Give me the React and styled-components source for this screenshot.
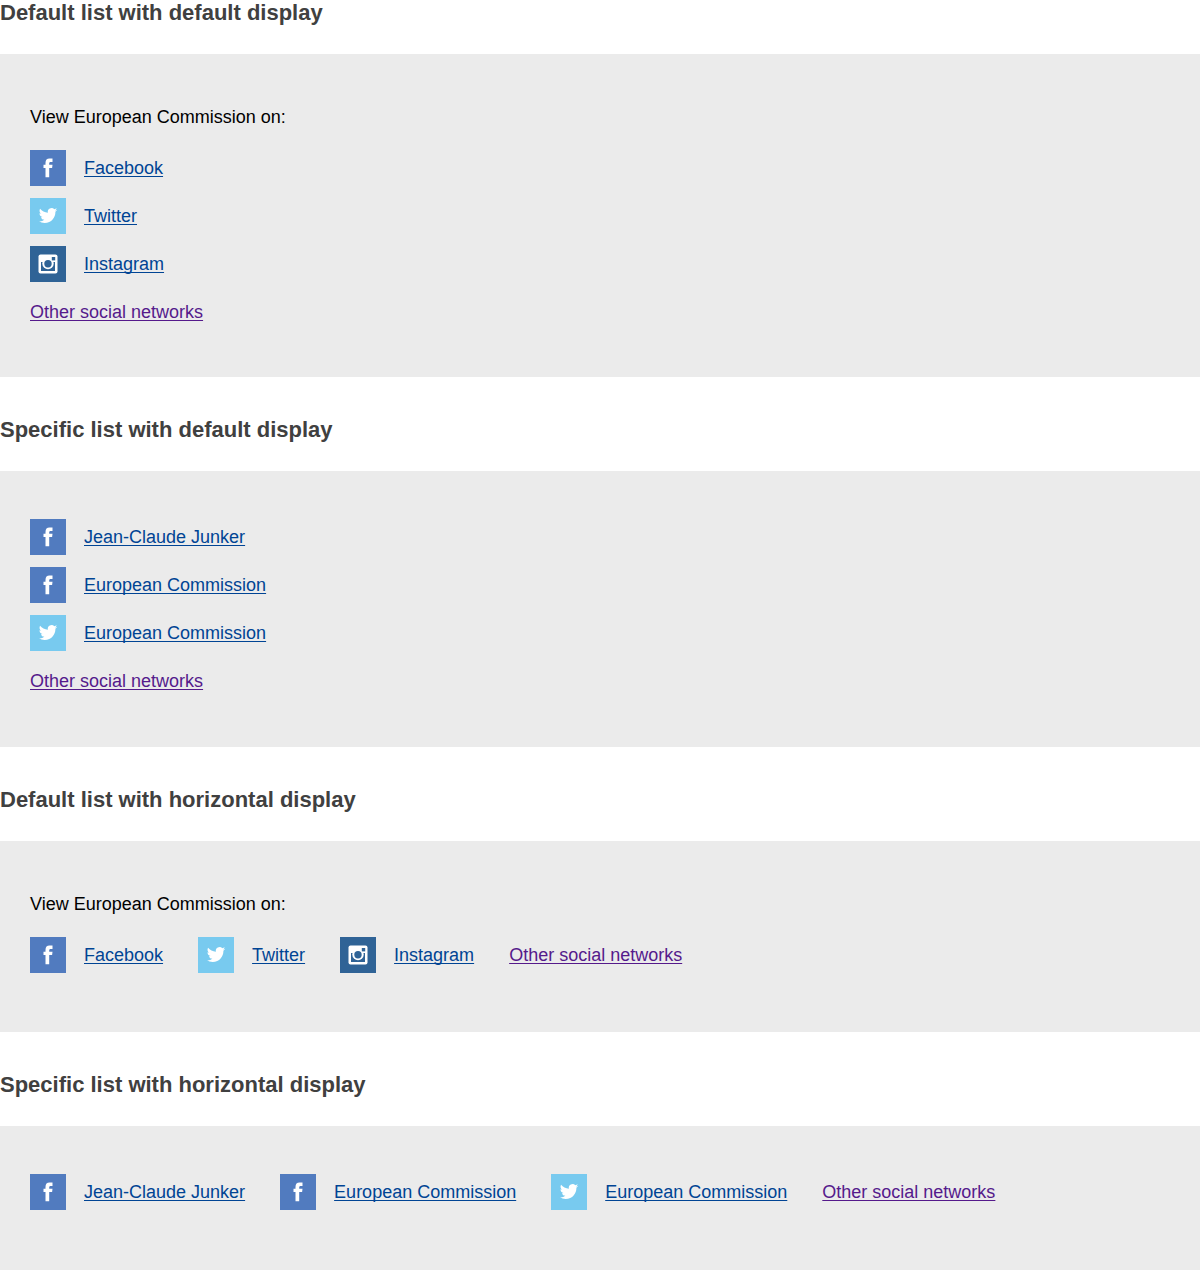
import React from "react";
import styled, { createGlobalStyle } from "styled-components";

const GlobalStyle = createGlobalStyle`
  body {
    margin: 0;
    background: #fff;
    color: #000;
    font-family: "Liberation Sans", Arial, sans-serif;
    font-size: 18px;
    line-height: 24px;
  }
`;

const Page = styled.main`
  display: flex;
  flex-direction: column;
  gap: 40px;
`;

const Heading = styled.h2`
  margin: 0 0 29px;
  color: #404040;
  font-size: 22px;
  line-height: 25px;
  font-weight: 700;
`;

const Panel = styled.div`
  padding: 48px 30px ${(p) => (p.$withIntro ? 47 : 48)}px;
  background: #ebebeb;
`;

const Intro = styled.p`
  margin: 3px 0 21px;
`;

const List = styled.ul`
  display: flex;
  flex-direction: ${(p) => (p.$horizontal ? "row" : "column")};
  flex-wrap: wrap;
  gap: ${(p) => (p.$horizontal ? "12px 35px" : "12px")};
  margin: 0;
  padding: 0 0 ${(p) => (p.$horizontal ? "12px" : "0")};
  list-style: none;
`;

const Item = styled.li`
  display: flex;
  align-items: center;
  min-height: 36px;
`;

const Link = styled.a`
  display: inline-flex;
  align-items: center;
  gap: 18px;
  color: ${(p) => (p.$visited ? "#551a8b" : "#004494")};
  text-decoration: underline;
  text-decoration-thickness: 1px;
  text-decoration-skip-ink: none;
  text-underline-offset: 2px;
`;

const Badge = styled.svg`
  flex: none;
  width: 36px;
  height: 36px;
  background: ${(p) => p.$color};
`;

const networks = {
  facebook: {
    color: "#517bbf",
    art: (
      <path
        fill="#fff"
        d="M15.500 27.300v-9.300h-2v-3.200h2v-1.900c0-2.900 1.400-4.300 4-4.300h3v3.300h-1.800c-1.100 0-1.500.500-1.500 1.500v1.400h3.300l-.4 3.200h-2.900v9.300z"
      />
    ),
  },
  twitter: {
    color: "#78caef",
    art: (
      <path
        fill="#fff"
        transform="translate(8.800 8.300) scale(.77)"
        d="M23.953 4.570a10 10 0 01-2.825.775 4.958 4.958 0 002.163-2.723c-.951.555-2.005.959-3.127 1.184a4.920 4.920 0 00-8.384 4.482C7.690 8.095 4.067 6.130 1.640 3.162a4.822 4.822 0 00-.666 2.475c0 1.710.870 3.213 2.188 4.096a4.904 4.904 0 01-2.228-.616v.060a4.923 4.923 0 003.946 4.827 4.996 4.996 0 01-2.212.085 4.936 4.936 0 004.604 3.417 9.867 9.867 0 01-6.102 2.105c-.390 0-.779-.023-1.170-.067a13.995 13.995 0 007.557 2.209c9.053 0 13.998-7.496 13.998-13.985 0-.210 0-.420-.015-.630A9.935 9.935 0 0024 4.590z"
      />
    ),
  },
  instagram: {
    color: "#2f6396",
    art: (
      <>
        <rect x="8.500" y="8.500" width="19" height="19" rx="2" fill="#fff" />
        <path d="M11 16h14v9H11z" fill="#2f6396" />
        <circle cx="18" cy="17.500" r="5.700" fill="#fff" />
        <circle cx="18" cy="17.700" r="3.700" fill="#2f6396" />
        <rect x="21.800" y="11" width="3.400" height="3.400" fill="#2f6396" />
      </>
    ),
  },
};

function SocialList({ title, intro, items, horizontal }) {
  return (
    <section>
      <Heading>{title}</Heading>
      <Panel $withIntro={Boolean(intro)}>
        {intro && <Intro>{intro}</Intro>}
        <List $horizontal={horizontal}>
          {items.map(([network, label]) => (
            <Item key={network + label}>
              <Link href={`#${network}`}>
                <Badge viewBox="0 0 36 36" $color={networks[network].color} aria-hidden="true">
                  {networks[network].art}
                </Badge>
                {label}
              </Link>
            </Item>
          ))}
          <Item>
            <Link href="#other" $visited>Other social networks</Link>
          </Item>
        </List>
      </Panel>
    </section>
  );
}

const defaults = [["facebook", "Facebook"], ["twitter", "Twitter"], ["instagram", "Instagram"]];
const specific = [["facebook", "Jean-Claude Junker"], ["facebook", "European Commission"], ["twitter", "European Commission"]];

export default function App() {
  return (
    <>
      <GlobalStyle />
      <Page>
        <SocialList title="Default list with default display" intro="View European Commission on:" items={defaults} />
        <SocialList title="Specific list with default display" items={specific} />
        <SocialList title="Default list with horizontal display" intro="View European Commission on:" items={defaults} horizontal />
        <SocialList title="Specific list with horizontal display" items={specific} horizontal />
      </Page>
    </>
  );
}
